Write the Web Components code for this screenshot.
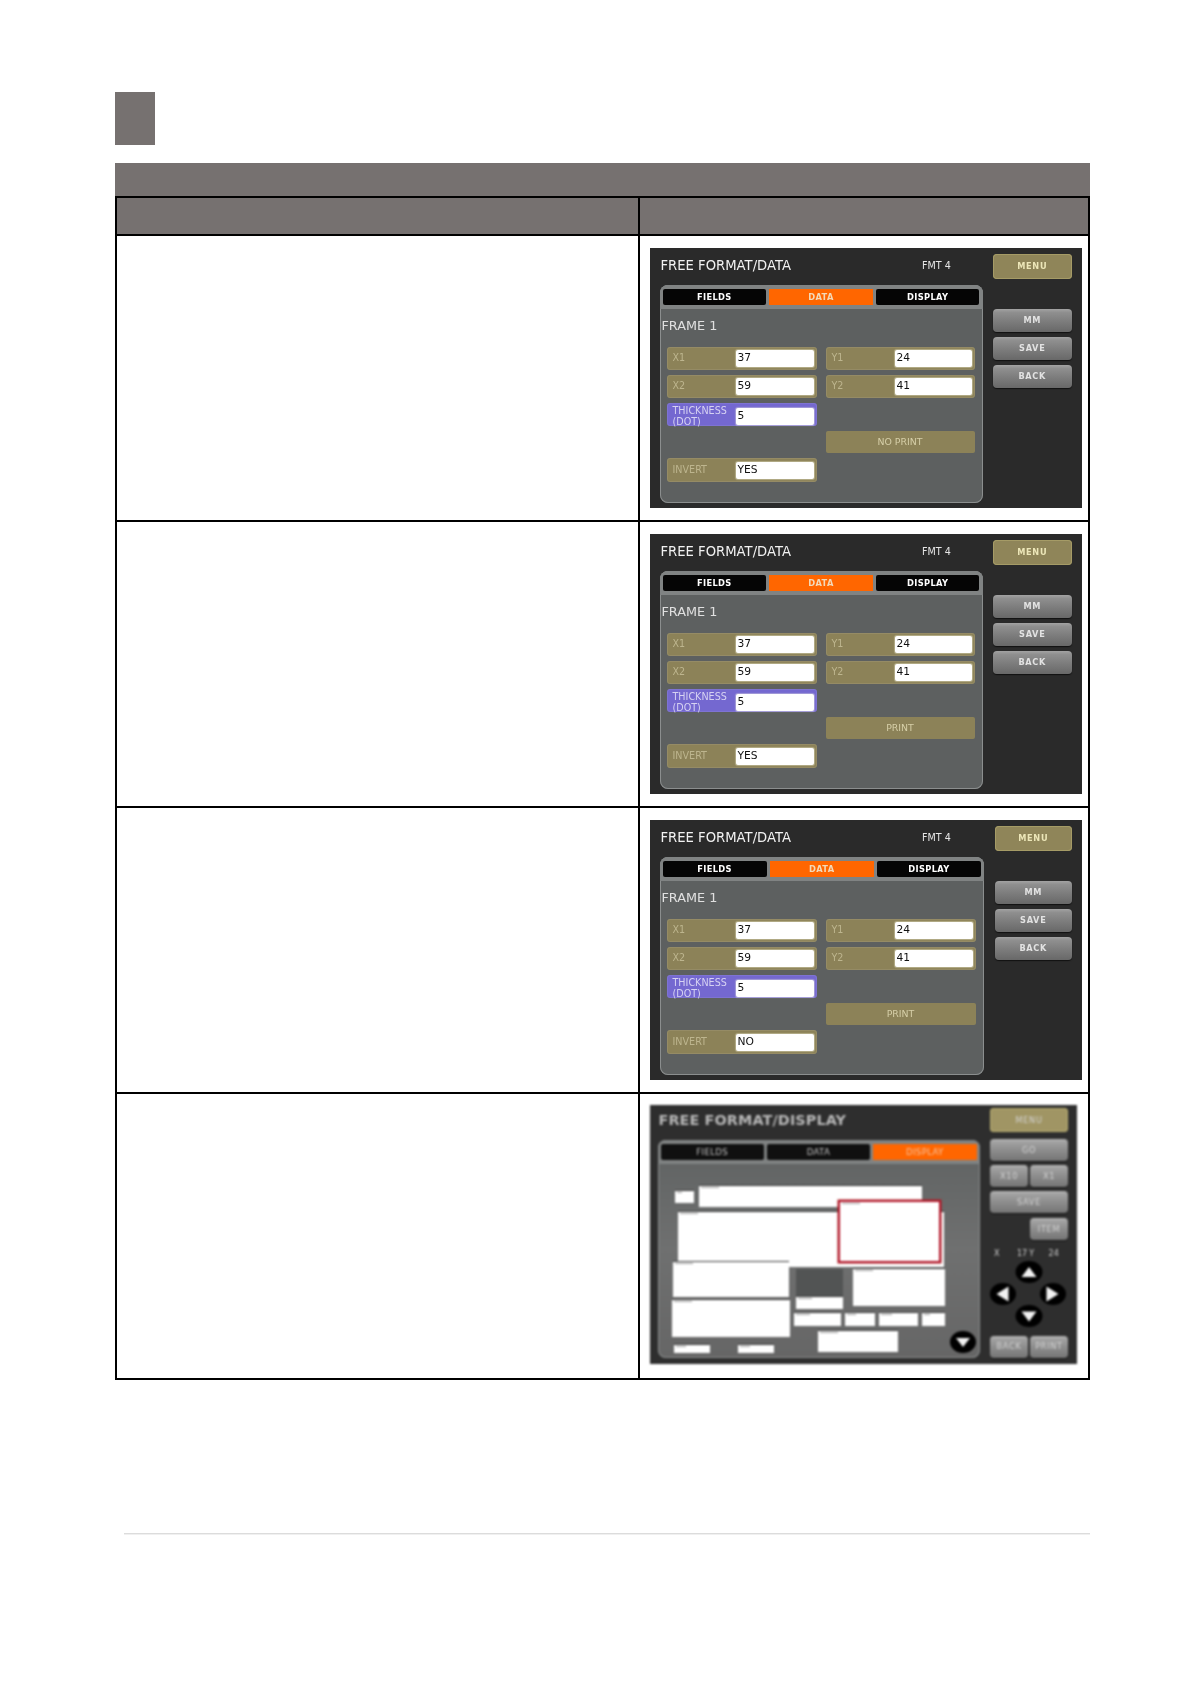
<!DOCTYPE html>
<html lang="en">
<head>
<meta charset="utf-8">
<title>Free format data</title>
<style>
html,body{margin:0;padding:0;background:#fff}
</style>
</head>
<body>
<manual-page>
  <spec-table>
    <spec-row><data-screen invert="YES" print="NO PRINT"></data-screen></spec-row>
    <spec-row><data-screen invert="YES" print="PRINT"></data-screen></spec-row>
    <spec-row><data-screen invert="NO" print="PRINT" wide></data-screen></spec-row>
    <spec-row style="--pic-top:11px"><display-screen></display-screen></spec-row>
  </spec-table>
</manual-page>
<script>
const FONT = '"DejaVu Sans","Liberation Sans",sans-serif';
function def(name, css, html) {
  const cls = class extends HTMLElement {
    connectedCallback() {
      if (this.shadowRoot) return;
      const r = this.attachShadow({mode:'open'});
      const h = typeof html === 'function' ? html(this) : html;
      r.innerHTML = '<style>' + css + '</style>' + h;
    }
  };
  customElements.define(name, cls);
}

def('manual-page', `
  :host{display:block;box-sizing:border-box;width:1191px;height:1683px;padding:92px 101px 0 115px;background:#fff;font-family:${FONT};overflow:hidden}
  .sq{width:40px;height:53px;background:#767170;margin-bottom:18px}
  .rule{height:1px;background:#dcdcdc;margin:153px 0 0 9px;box-shadow:0 1px 0 #f0f0f0}
`, `<div class="sq"></div><slot></slot><div class="rule"></div>`);

def('spec-table', `
  :host{display:block}
  .bar{height:33px;background:#767170}
  .head{display:grid;grid-template-columns:521px 1fr;height:40px;box-sizing:border-box;border:2px solid #000;background:#767170}
  .head div+div{border-left:2px solid #000}
`, `<div class="bar"></div><div class="head"><div></div><div></div></div><slot></slot>`);

def('spec-row', `
  :host{display:grid;grid-template-columns:521px 1fr;height:286px;box-sizing:border-box;border:2px solid #000;border-top:0}
  .l{border-right:2px solid #000;margin-right:-2px}
  .r{padding:var(--pic-top,12px) 0 0 11.5px;display:block}
`, `<div class="l"></div><div class="r"><slot></slot></div>`);

def('field-row', `
  :host{display:grid;grid-template-columns:66px 1fr;align-items:center;box-sizing:border-box;height:23px;padding:3px;border-radius:3px;background:var(--bg,#8c8258);box-shadow:inset 0 0 0 1px rgba(255,255,255,.08);color:var(--fg,#bdb58e);font:9.6px/10.5px ${FONT}}
  .lab{padding-left:3px;white-space:pre-line}
  .val{background:#fff;color:#111;height:17px;border-radius:2px;font:10.7px/15.5px ${FONT};padding:0 2px;box-sizing:border-box;box-shadow:0 0 1px 1px rgba(255,255,230,.35)}
`, el => `<div class="lab">${el.getAttribute('label')}</div><div class="val">${el.getAttribute('value')}</div>`);

def('push-button', `
  :host{display:flex;align-items:center;justify-content:center;box-sizing:border-box;height:var(--h,23px);border-radius:4px;font:var(--btn-font,bold 8.2px/1 ${FONT});letter-spacing:.7px;color:var(--btn-fg,#e2e2e2);padding-bottom:.5px;
    background:linear-gradient(#a3a3a3 0,#8f8f8f 15%,#7c7c7c 55%,#686868 100%);box-shadow:0 1px 1px #111}
  :host([gold]){color:var(--btn-fg,#ece6b8);background:#8f8559;box-shadow:inset 0 0 0 1px #a59b66;padding-bottom:0}
`, `<slot></slot>`);

def('tab-bar', `
  :host{display:grid;grid-template-columns:1fr 1fr 1fr;gap:3px;box-sizing:border-box;height:24px;padding:3.5px 3px 4px 3px;background:#808383;border-radius:8px 8px 0 0;font:var(--tab-font,bold 8.3px/16px ${FONT});letter-spacing:.35px;text-align:center;color:var(--tab-fg,#fff)}
  div{background:var(--tab-bg,#050505);border-radius:2px}
  div.on{background:#ff6600;color:var(--tab-on,#f3d9b8);border-radius:0}
`, el => ['FIELDS','DATA','DISPLAY'].map(t => `<div class="${el.getAttribute('active')===t?'on':''}">${t}</div>`).join(''));

def('data-screen', `
  :host{display:grid;grid-template-columns:333px 1fr;width:432px;height:260px;background:#2a2a2a;color:#fff;filter:blur(.35px);font-family:${FONT}}
  :host([wide]){grid-template-columns:334.5px 1fr;}
  :host([wide]) .side{padding-right:9.5px}
  :host([wide]) .grid{grid-template-columns:150px 150px}
  .head{display:flex;align-items:center;height:37px;padding:0 0 3px 11px;box-sizing:border-box;font-size:13.2px;color:#f2f2f2}
  .fmt{font-size:9.6px;margin-left:131px;color:#e6e6e6}
  .panel{margin-left:10px;height:218px;border-radius:8px;background:#5d6060;box-shadow:inset 0 0 0 1px #8b8e8e}
  .frame{height:38px;display:flex;align-items:center;padding:0 0 5px 2px;box-sizing:border-box;font-size:12.8px;color:#e0e0e0}
  .grid{display:grid;grid-template-columns:150px 149px;column-gap:9px;grid-auto-rows:23px;row-gap:5px;padding-left:7px}
  .thick{--bg:#7468d0;--fg:#d6d2f2;grid-column:1}
  .print{grid-column:2;grid-row:4;display:flex;align-items:center;justify-content:center;background:#8c8258;color:#d6cfa8;font-size:9.4px;height:22px;border-radius:2px;padding-bottom:1px;box-sizing:border-box}
  .inv{grid-column:1;grid-row:5;height:24px;margin-top:-1px}
  .side{display:flex;flex-direction:column;padding:6px 10px 0 10.5px;gap:5px}
  .side push-button:first-child{height:25px;margin-bottom:25px}
`, el => `
  <div>
    <div class="head"><span>FREE FORMAT/DATA</span><span class="fmt">FMT 4</span></div>
    <div class="panel">
      <tab-bar active="DATA"></tab-bar>
      <div class="frame">FRAME 1</div>
      <div class="grid">
        <field-row label="X1" value="37"></field-row><field-row label="Y1" value="24"></field-row>
        <field-row label="X2" value="59"></field-row><field-row label="Y2" value="41"></field-row>
        <field-row class="thick" label="THICKNESS\n(DOT)" value="5"></field-row>
        <div class="print">${el.getAttribute('print')}</div>
        <field-row class="inv" label="INVERT" value="${el.getAttribute('invert')}"></field-row>
      </div>
    </div>
  </div>
  <div class="side">
    <push-button gold>MENU</push-button>
    <push-button>MM</push-button>
    <push-button>SAVE</push-button>
    <push-button>BACK</push-button>
  </div>`);

def('label-box', `
  :host{position:absolute;background:#fff;box-shadow:0 -1px 0 #3a3a3a}
  :host([patch]){background:#525454;box-shadow:none}
  :host([sel]){background:#fff;box-shadow:0 0 0 .5px #a22;border:2px solid #b3162a;box-sizing:border-box}
  :host::before{content:"";display:block;position:absolute;left:2px;top:1px;width:30%;max-width:18px;height:1px;background:#9a9a9a}
  :host([patch])::before{display:none}
`, '');

def('arrow-pad', `
  :host{display:block;height:72px}
  svg{display:block}
`, `<svg width="78" height="72" viewBox="0 0 78 72">
  <g fill="#000"><ellipse cx="39" cy="14" rx="13.5" ry="11"/><ellipse cx="13" cy="36" rx="13" ry="11"/><ellipse cx="63" cy="36" rx="13" ry="11"/><ellipse cx="39" cy="58" rx="13.5" ry="11"/></g>
  <g fill="#f2f2f2"><path d="M39 9l7.5 10h-15z"/><path d="M6.5 36l12-7.5v15z"/><path d="M68.5 36l-12-7.5v15z"/><path d="M39 63.5l-7.5-10h15z"/></g>
</svg>`);

def('display-screen', `
  :host{display:grid;grid-template-columns:331px 1fr;width:427px;height:259px;background:#2e2e2e;color:#e8e8e8;filter:blur(.8px);font-family:${FONT};--btn-font:normal 8.2px/1 ${FONT};--btn-fg:#bdbdbd;--tab-font:normal 8.6px/16px ${FONT};--tab-fg:#c4c4c4;--tab-bg:#101010;--tab-on:#f6c6a4}
  .head{height:35px;padding:0 0 5px 9px;box-sizing:border-box;display:flex;align-items:center;font-size:14.4px;font-weight:bold;color:#b8b8b8;letter-spacing:.1px}
  .panel{position:relative;margin-left:8px;height:218px;width:322px;border-radius:8px;background:linear-gradient(#5f6262,#6f7070 50%,#666);box-shadow:inset 0 0 0 1px #8b8e8e}
  .canvas{position:absolute;inset:0}
  .down{position:absolute;left:291px;top:190px}
  .side{display:flex;flex-direction:column;padding:3px 9px 0 9.5px;gap:4px;--h:22px}
  .side>push-button:first-child{--h:24px;margin-bottom:3px}
  .two{display:grid;grid-template-columns:1fr 1fr;gap:2px}
  .one{margin:1px 0 0 40px}
  .xy{display:flex;font-size:8px;line-height:11px;height:11px;margin-top:3.5px;padding-left:4px;color:#cfcfcf}
  .xy span:nth-child(2){margin-left:17.5px}
  .xy span:nth-child(3){margin-left:2px}
  .xy span:nth-child(4){margin-left:14.5px}
  .pad{margin-top:-5px}
  .bottom{margin-top:2px}
  push-button{filter:brightness(1.12)}
`, `
  <div>
    <div class="head">FREE FORMAT/DISPLAY</div>
    <div class="panel">
      <tab-bar active="DISPLAY"></tab-bar>
      <div class="canvas">
        <label-box style="left:138px;top:129px;width:47px;height:28px" patch></label-box>
        <label-box style="left:17px;top:51px;width:19px;height:12px"></label-box>
        <label-box style="left:41px;top:46px;width:223px;height:21px"></label-box>
        <label-box style="left:20px;top:72px;width:266px;height:55px"></label-box>
        <label-box style="left:15px;top:122px;width:116px;height:35px"></label-box>
        <label-box style="left:14px;top:160px;width:118px;height:37px"></label-box>
        <label-box style="left:195px;top:129px;width:92px;height:37px"></label-box>
        <label-box style="left:138px;top:157px;width:47px;height:12px"></label-box>
        <label-box style="left:136px;top:173px;width:47px;height:13px"></label-box>
        <label-box style="left:187px;top:173px;width:30px;height:13px"></label-box>
        <label-box style="left:221px;top:173px;width:39px;height:13px"></label-box>
        <label-box style="left:264px;top:173px;width:23px;height:13px"></label-box>
        <label-box style="left:160px;top:191px;width:80px;height:21px"></label-box>
        <label-box style="left:16px;top:205px;width:36px;height:8px"></label-box>
        <label-box style="left:80px;top:205px;width:36px;height:8px"></label-box>
        <label-box style="left:180px;top:60px;width:103px;height:63px" sel></label-box>
      </div>
      <svg class="down" width="28" height="24" viewBox="0 0 28 24"><ellipse cx="14" cy="12" rx="13" ry="11"/><path d="M14 17l-7-9h14z" fill="#f2f2f2"/></svg>
    </div>
  </div>
  <div class="side">
    <push-button gold>MENU</push-button>
    <push-button>GO</push-button>
    <div class="two"><push-button>X10</push-button><push-button>X1</push-button></div>
    <push-button>SAVE</push-button>
    <push-button class="one">ITEM</push-button>
    <div class="xy"><span>X</span><span>17</span><span>Y</span><span>24</span></div>
    <arrow-pad class="pad"></arrow-pad>
    <div class="two bottom"><push-button>BACK</push-button><push-button>PRINT</push-button></div>
  </div>`);
</script>
</body>
</html>
